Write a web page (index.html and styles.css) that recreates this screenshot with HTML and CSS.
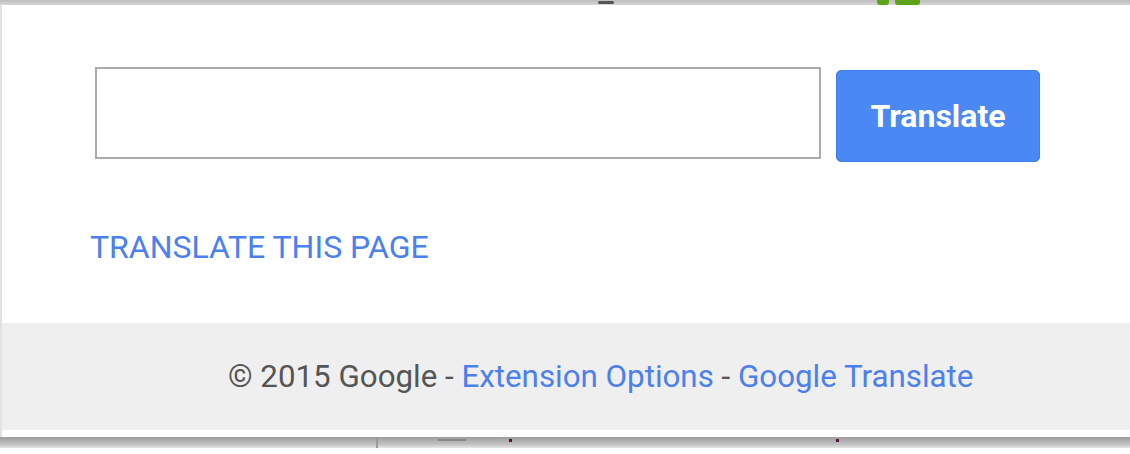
FILE: index.html
```html
<!DOCTYPE html>
<html lang="en">
<head>
    <meta charset="UTF-8">
    <meta name="viewport" content="width=device-width, initial-scale=1.0">
    <title>Google Translate</title>
    <link rel="stylesheet" href="styles.css">
</head>
<body>

    <!-- bande du navigateur au-dessus du popup -->
    <div class="chrome-top">
        <span class="mark-dark"></span>
        <span class="mark-green"></span>
        <span class="mark-green mark-green-wide"></span>
    </div>

    <div class="popup">
        <div class="main">
            <form class="translate-form" id="translateForm">
                <input type="text" id="query" class="query">
                <button type="submit" class="btn-translate">Translate</button>
            </form>

            <a href="#" class="page-link">TRANSLATE THIS PAGE</a>
        </div>

        <div class="footer">
            &copy; 2015 Google - <a href="#">Extension Options</a> - <a href="#">Google Translate</a>
        </div>
    </div>

    <!-- ombre sous le popup -->
    <div class="chrome-bottom">
        <span class="tick"></span>
        <span class="dash"></span>
        <span class="dot"></span>
        <span class="dot dot-right"></span>
    </div>

</body>
</html>
```

FILE: styles.css
```css
/* popup Google Translate */
body {
    margin: 0;
    padding: 0;
    background-color: white;
    font-family: Roboto, "Liberation Sans", Arial, sans-serif;
    overflow: hidden;
}

.chrome-top {
    display: flex;
    height: 5px;
    background: linear-gradient(#bdbdbd, #d6d6d6);
}

.mark-dark {
    margin-left: 598px;
    width: 16px;
    height: 3px;
    margin-top: 1px;
    background-color: #555;
    border-radius: 2px;
}

.mark-green {
    margin-left: 263px;
    width: 12px;
    height: 5px;
    background-color: #5da419;
    border-radius: 0 0 3px 3px;
}

.mark-green-wide {
    margin-left: 6px;
    width: 25px;
}

.popup {
    border-left: 2px solid #e2e2e2;
    background-color: white;
    padding-bottom: 7px;
}

.main {
    height: 318px;
    padding-left: 93px;
    padding-top: 62px;
    box-sizing: border-box;
}

.translate-form {
    display: flex;
    gap: 15px;
}

.query {
    width: 726px;
    height: 92px;
    box-sizing: border-box;
    border: 2px solid #ababab;
    margin: 0;
    padding: 0 10px;
    font-size: 28px;
    outline: none;
}

.btn-translate {
    width: 204px;
    height: 92px;
    margin-top: 3px;
    background-color: #4a89f3;
    border: 1px solid #3f7de8;
    border-radius: 5px;
    color: white;
    font-family: Roboto, "Liberation Sans", Arial, sans-serif;
    font-size: 32px;
    font-weight: bold;
    cursor: pointer;
}

.page-link {
    display: inline-block;
    margin-top: 66px;
    margin-left: -5px;
    color: #4c7ff0;
    font-size: 32px;
    text-decoration: none;
}

.footer {
    height: 107px;
    box-sizing: border-box;
    padding-left: 226px;
    padding-top: 35px;
    background-color: #efefef;
    color: #555;
    font-size: 31.3px;
}

.footer a {
    color: #4c7ff0;
    text-decoration: none;
}

.chrome-bottom {
    position: relative;
    height: 11px;
    background: linear-gradient(#9c9c9c, #c4c4c4 70%, #e6e6e6);
}

.tick {
    position: absolute;
    left: 376px;
    top: 0;
    width: 2px;
    height: 17px;
    background-color: #999;
}

.dash {
    position: absolute;
    left: 438px;
    top: 2px;
    width: 28px;
    height: 2px;
    background-color: #888;
}

.dot {
    position: absolute;
    left: 509px;
    top: 2px;
    width: 3px;
    height: 3px;
    background-color: #5a1040;
}

.dot-right {
    left: 836px;
}
```
